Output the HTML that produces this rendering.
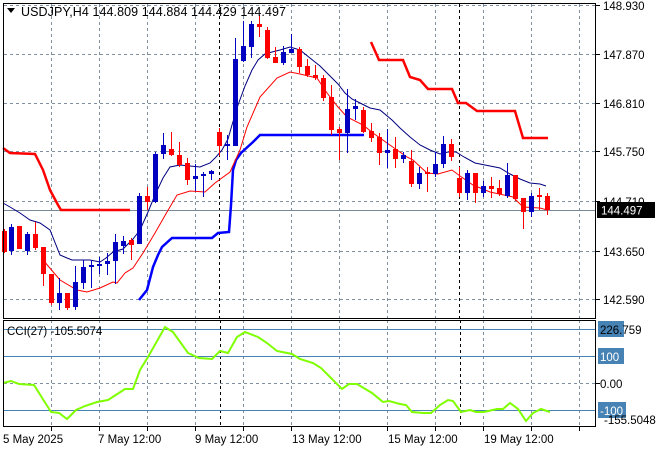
<!DOCTYPE html>
<html><head><meta charset="utf-8"><style>
html,body{margin:0;padding:0;background:#fff;width:660px;height:450px;overflow:hidden}
svg{display:block;font-family:"Liberation Sans",sans-serif}
</style></head><body>
<svg width="660" height="450" viewBox="0 0 660 450" xmlns="http://www.w3.org/2000/svg">
<rect width="660" height="450" fill="#fff"/>
<g stroke="#8090a0" stroke-width="1" stroke-dasharray="3,3" fill="none">
<path d="M51.5 4V318M99.5 4V318M147.5 4V318M195.5 4V318M243.5 4V318M291.5 4V318M339.5 4V318M387.5 4V318M435.5 4V318M483.5 4V318M531.5 4V318M579.5 4V318"/>
<path d="M51.5 320V426M99.5 320V426M147.5 320V426M195.5 320V426M243.5 320V426M291.5 320V426M339.5 320V426M387.5 320V426M435.5 320V426M483.5 320V426M531.5 320V426M579.5 320V426"/>
<path d="M4 5.5H595M4 54.5H595M4 103.5H595M4 151.5H595M4 201.5H595M4 251.5H595M4 299.5H595M4 383.5H595"/>
</g>
<g stroke="#000" stroke-dasharray="3,3"><path d="M219.5 4V318M459.5 4V318M220.5 320V426M460.5 320V426"/></g>
<line x1="4" y1="210.5" x2="595" y2="210.5" stroke="#778899"/>
<polyline fill="none" stroke="#f00" stroke-width="2.5" points="3,148 10,153 35,154 43,170 50,190 58,205 61,210 130,210"/>
<polyline fill="none" stroke="#f00" stroke-width="2.5" points="371,42 379,60 403,60 410,77 420,80 428,89 452,89 458,103 466,103 477,111 515,111 523,138 548,138"/>
<polyline fill="none" stroke="#0000ff" stroke-width="2.5" points="139,300 147,290 153,267 158,255 162,247 172,238 212,238 218,233 229,232 231,205 233,170 236,160 241,153 253,142 260,135 364,135"/>
<polyline fill="none" stroke="#000080" stroke-width="1" points="3,203 10,207 20,213 30,220 40,223 50,230 60,255 67,258 72,260 90,260 100,262 106,258 113,252 123,249 133,239 140,230 148,212 155,195 163,178 170,167 180,165 200,167 210,163 216,157 222,150 228,139 232,125 238,105 245,86 252,70 258,60 265,54 272,52 280,50 290,47 300,50 310,58 320,66 330,76 338,84 345,93 352,99 360,103 370,108 380,110 392,120 400,128 410,137 420,145 430,150 440,154 448,152 456,152 464,157 475,163 490,166 500,168 510,174 520,179 530,183 540,184 546,186"/>
<polyline fill="none" stroke="#f00" stroke-width="1" points="43,260 60,280 77,290 87,292 100,288 113,282 117,283 125,273 133,268 143,253 155,233 167,212 177,195 190,191 205,192 215,183 230,172 240,150 247,127 260,97 277,78 290,72 300,74 317,78 327,93 338,107 347,117 363,125 373,133 387,143 397,150 407,157 413,160 427,173 438,174 452,170 460,176 473,185 490,192 513,197 523,207 540,208 547,210"/>
<g fill="#f00" stroke="#f00">
<path stroke-width="1" fill="none" d="M4.5 229V253M19.5 226V249M35.5 222V250M43.5 247V286M51.5 274V305M67.5 293V310M131.5 238V260M147.5 187V210M171.5 132V156M179.5 142V167M187.5 158V185M219.5 128V156M259.5 15V37M267.5 27V59M275.5 47V63M299.5 47V73M307.5 59V77M315.5 65V80M323.5 75V101M331.5 85V135M339.5 127V160M363.5 107V133M371.5 123V142M379.5 133V165M395.5 137V168M411.5 150V187M427.5 167V192M451.5 139V161M459.5 167V197M475.5 173V203M491.5 177V198M499.5 180V196M515.5 175V201M523.5 198V229M539.5 188V210M547.5 193V215"/>
<g stroke="none">
<rect x="2" y="231" width="5" height="21"/><rect x="17" y="226" width="5" height="23"/><rect x="33" y="234" width="5" height="14"/><rect x="41" y="247" width="5" height="27"/><rect x="49" y="274" width="5" height="29"/><rect x="65" y="293" width="5" height="15"/><rect x="129" y="240" width="5" height="5"/><rect x="145" y="196" width="5" height="6"/><rect x="169" y="149" width="5" height="6"/><rect x="177" y="155" width="5" height="10"/><rect x="185" y="163" width="5" height="17"/><rect x="217" y="132" width="5" height="14"/><rect x="257" y="24" width="5" height="3"/><rect x="265" y="30" width="5" height="28"/><rect x="273" y="57" width="5" height="6"/><rect x="297" y="49" width="5" height="18"/><rect x="305" y="66" width="5" height="9"/><rect x="313" y="75" width="5" height="3"/><rect x="321" y="78" width="5" height="20"/><rect x="329" y="97" width="5" height="33"/><rect x="337" y="129" width="5" height="4"/><rect x="361" y="110" width="5" height="22"/><rect x="369" y="131" width="5" height="7"/><rect x="377" y="137" width="5" height="16"/><rect x="393" y="149" width="5" height="10"/><rect x="409" y="161" width="5" height="23"/><rect x="425" y="172" width="5" height="2"/><rect x="449" y="144" width="5" height="13"/><rect x="457" y="178" width="5" height="15"/><rect x="473" y="173" width="5" height="20"/><rect x="489" y="186" width="5" height="3"/><rect x="497" y="188" width="5" height="6"/><rect x="513" y="175" width="5" height="24"/><rect x="521" y="198" width="5" height="14"/><rect x="537" y="195" width="5" height="2"/><rect x="545" y="196" width="5" height="14"/>
</g></g>
<g fill="#0000c0" stroke="#0000c0">
<path stroke-width="1" fill="none" d="M11.5 224V255M27.5 232V255M59.5 278V310M75.5 266V310M83.5 260V289M91.5 260V288M99.5 257V274M107.5 253V275M115.5 234V284M123.5 236V254M139.5 193V244M155.5 152V203M163.5 133V159M195.5 164V191M203.5 172V197M211.5 170V180M227.5 135V160M235.5 38V146M243.5 21V62M251.5 21V58M283.5 46V65M291.5 34V53M347.5 89V153M355.5 99V120M387.5 129V168M403.5 152V163M419.5 167V189M435.5 152V177M443.5 136V168M467.5 170V200M483.5 181V197M507.5 163V198M531.5 193V217"/>
<g stroke="none">
<rect x="9" y="227" width="5" height="24"/><rect x="25" y="234" width="5" height="17"/><rect x="57" y="293" width="5" height="10"/><rect x="73" y="282" width="5" height="25"/><rect x="81" y="267" width="5" height="16"/><rect x="89" y="265" width="5" height="2"/><rect x="97" y="264" width="5" height="2"/><rect x="105" y="261" width="5" height="3"/><rect x="113" y="242" width="5" height="19"/><rect x="121" y="241" width="5" height="5"/><rect x="137" y="196" width="5" height="48"/><rect x="153" y="154" width="5" height="48"/><rect x="161" y="145" width="5" height="9"/><rect x="193" y="176" width="5" height="3"/><rect x="201" y="174" width="5" height="2"/><rect x="209" y="171" width="5" height="3"/><rect x="225" y="144" width="5" height="2"/><rect x="233" y="59" width="5" height="87"/><rect x="241" y="46" width="5" height="15"/><rect x="249" y="24" width="5" height="23"/><rect x="281" y="52" width="5" height="11"/><rect x="289" y="49" width="5" height="4"/><rect x="345" y="109" width="5" height="24"/><rect x="353" y="106" width="5" height="3"/><rect x="385" y="150" width="5" height="3"/><rect x="401" y="155" width="5" height="4"/><rect x="417" y="173" width="5" height="11"/><rect x="433" y="164" width="5" height="10"/><rect x="441" y="144" width="5" height="20"/><rect x="465" y="173" width="5" height="20"/><rect x="481" y="186" width="5" height="7"/><rect x="505" y="175" width="5" height="21"/><rect x="529" y="196" width="5" height="16"/>
</g></g>
<g stroke="#4682b4" stroke-width="1"><path d="M4 329.5H595M4 356.5H595M4 410.5H595"/></g>
<polyline fill="none" stroke="#7fff00" stroke-width="2" points="3,383 11,381 19,384 34,385 51,412 59,413 67,419 76,410 85,406 97,402 108,400 125,389 133,389 140,370 148,357 165,327 173,332 188,353 199,358 212,359 220,351 228,353 237,337 245,332 258,337 267,343 277,351 292,354 300,359 313,363 321,368 330,377 342,389 349,384 357,384 372,393 383,402 389,401 400,404 406,405 412,412 423,413 431,413 440,405 448,400 453,401 461,412 470,410 476,412 484,412 497,409 503,409 510,403 518,409 526,421 533,413 541,409 550,412"/>
<rect x="3.5" y="3.5" width="592" height="315" fill="none" stroke="#000"/>
<rect x="3.5" y="320.5" width="592" height="106" fill="none" stroke="#000"/>
<g stroke="#000"><path d="M596 5.5H600M596 54.5H600M596 103.5H600M596 151.5H600M596 201.5H600M596 251.5H600M596 299.5H600M596 383.5H600M51.5 427V431M99.5 427V431M147.5 427V431M195.5 427V431M243.5 427V431M291.5 427V431M339.5 427V431M387.5 427V431M435.5 427V431M483.5 427V431M531.5 427V431M579.5 427V431"/></g>
<g font-size="11.5" fill="#000">
<text x="603" y="10">148.930</text>
<text x="603" y="59">147.870</text>
<text x="603" y="108">146.810</text>
<text x="603" y="156">145.750</text>
<text x="603" y="206">144.710</text>
<text x="603" y="256">143.650</text>
<text x="603" y="304">142.590</text>
</g>
<rect x="597" y="202" width="58" height="16" fill="#000"/>
<text x="601" y="214.5" font-size="11.5" fill="#fff">144.497</text>
<rect x="598" y="321" width="26" height="16" fill="#4682b4"/>
<rect x="598" y="348" width="26" height="16" fill="#4682b4"/>
<rect x="598" y="402" width="28" height="16" fill="#4682b4"/>
<g font-size="11.5" fill="#000">
<text x="600" y="334">226.759</text>
<text x="600" y="361" fill="#fff">100</text>
<text x="600" y="388">0.00</text>
<text x="600" y="415" fill="#fff">-100</text>
<text x="604" y="424">-155.5048</text>
<text x="7" y="335">CCI(27) -105.5074</text>
</g>
<g font-size="11.5" fill="#000">
<text x="3" y="443">5 May 2025</text>
<text x="98" y="443">7 May 12:00</text>
<text x="195" y="443">9 May 12:00</text>
<text x="292" y="443">13 May 12:00</text>
<text x="388" y="443">15 May 12:00</text>
<text x="484" y="443">19 May 12:00</text>
</g>
<path d="M7 8H15L11 13Z" fill="#000"/>
<text x="21" y="16" font-size="12.5" fill="#000" textLength="265" lengthAdjust="spacing">USDJPY,H4 144.809 144.884 144.429 144.497</text>
</svg>
</body></html>
